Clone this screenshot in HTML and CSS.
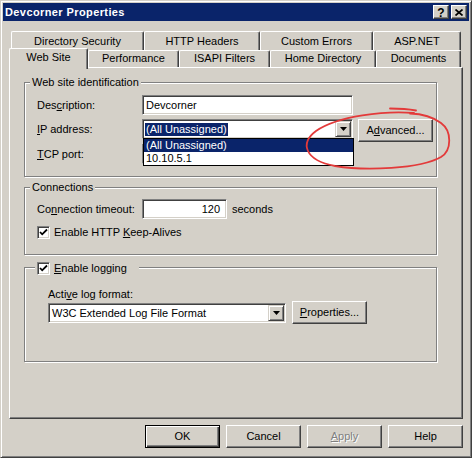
FILE: index.html
```html
<!DOCTYPE html>
<html>
<head>
<meta charset="utf-8">
<link rel="stylesheet" href="styles.css">
</head>
<body>
<div class="window">
  <div class="titlebar">
    <span class="title">Devcorner Properties</span>
    <div class="caption-btns">
      <span class="cap-btn cap-help">?</span>
      <span class="cap-btn cap-close"><svg width="8" height="7" viewBox="0 0 8 7"><path d="M0.5 0.5 L7.5 6.5 M7.5 0.5 L0.5 6.5" stroke="#000" stroke-width="1.7" fill="none"/></svg></span>
    </div>
  </div>

  <div class="tabstrip">
    <div class="tab-row tab-row-back">
      <div class="tab t-dirsec">Directory Security</div>
      <div class="tab t-http">HTTP Headers</div>
      <div class="tab t-custom">Custom Errors</div>
      <div class="tab t-asp">ASP.NET</div>
    </div>
    <div class="tab-row tab-row-front">
      <div class="tab t-web active">Web Site</div>
      <div class="tab t-perf">Performance</div>
      <div class="tab t-isapi">ISAPI Filters</div>
      <div class="tab t-home">Home Directory</div>
      <div class="tab t-docs">Documents</div>
    </div>
  </div>

  <div class="panel">
    <div class="group g-ident">
      <div class="group-title">Web site identification</div>
      <div class="form-row r-desc">
        <span class="lbl">Des<u>c</u>ription:</span>
        <div class="sunken textbox tb-desc">Devcorner</div>
      </div>
      <div class="form-row r-ip">
        <span class="lbl"><u>I</u>P address:</span>
        <div class="sunken combo cb-ip">
          <span class="combo-text"><span class="sel">(All Unassigned)</span></span>
          <span class="combo-arrow"><svg width="7" height="4" viewBox="0 0 7 4"><path d="M0 0 H7 L3.5 4 Z" fill="#000"/></svg></span>
          <ul class="droplist">
            <li class="hl">(All Unassigned)</li>
            <li>10.10.5.1</li>
          </ul>
        </div>
        <button class="btn btn-adv">A<u>d</u>vanced...</button>
      </div>
      <div class="form-row r-tcp">
        <span class="lbl"><u>T</u>CP port:</span>
        <div class="sunken textbox tb-port"></div>
      </div>
    </div>

    <div class="group g-conn">
      <div class="group-title">Connections</div>
      <div class="form-row r-timeout">
        <span class="lbl">Co<u>n</u>nection timeout:</span>
        <div class="sunken textbox tb-timeout">120</div>
        <span class="unit">seconds</span>
      </div>
      <div class="check-row r-keep">
        <span class="sunken checkbox"><svg width="9" height="9" viewBox="0 0 9 9"><path d="M1 4 L3.2 6.3 L8 1.5" stroke="#000" stroke-width="1.8" fill="none"/></svg></span>
        <span class="check-lbl">Enable HTTP <u>K</u>eep-Alives</span>
      </div>
    </div>

    <div class="group g-log">
      <div class="group-title check-title">
        <span class="sunken checkbox"><svg width="9" height="9" viewBox="0 0 9 9"><path d="M1 4 L3.2 6.3 L8 1.5" stroke="#000" stroke-width="1.8" fill="none"/></svg></span>
        <span class="check-lbl"><u>E</u>nable logging</span>
      </div>
      <div class="log-lbl">Acti<u>v</u>e log format:</div>
      <div class="log-row">
        <div class="sunken combo cb-log">
          <span class="combo-text"><span class="plain">W3C Extended Log File Format</span></span>
          <span class="combo-arrow"><svg width="7" height="4" viewBox="0 0 7 4"><path d="M0 0 H7 L3.5 4 Z" fill="#000"/></svg></span>
        </div>
        <button class="btn btn-props"><u>P</u>roperties...</button>
      </div>
    </div>
  </div>

  <div class="dialog-buttons">
    <button class="btn btn-default">OK</button>
    <button class="btn">Cancel</button>
    <button class="btn btn-disabled"><u>A</u>pply</button>
    <button class="btn">Help</button>
  </div>

  <svg class="annotation" width="472" height="458" viewBox="0 0 472 458">
    <path d="M390 108.5 C398 108.5 408 109 416 110.5" stroke="#e33a3a" stroke-width="1.8" fill="none" stroke-linecap="round"/>
    <path d="M414 113 C385 110.5 338 116 316 131 C300 143 304 160 335 166 C365 171 420 169 441 157 C452 150 452 131 441 123 C433 117 424 114 410 113.5" stroke="#e33a3a" stroke-width="1.8" fill="none" stroke-linecap="round"/>
  </svg>
</div>
</body>
</html>
```

FILE: styles.css
```css
* { box-sizing: border-box; }
html, body { margin: 0; padding: 0; overflow: hidden; }
body {
  font: 11px/13px "Liberation Sans", Arial, sans-serif;
  color: #000;
  background: #d4d0c8;
}

.window {
  position: relative;
  width: 472px;
  height: 458px;
  padding: 2px;
  border: 1px solid;
  border-color: #d4d0c8 #404040 #404040 #d4d0c8;
  box-shadow: inset 1px 1px #fff, inset -1px -1px #808080;
  background: #d4d0c8;
}

/* title bar */
.titlebar {
  height: 18px;
  background: #0a246a;
  display: flex;
  align-items: center;
  padding-left: 2px;
}
.title {
  color: #fff;
  font-weight: bold;
  letter-spacing: 0.4px;
}
.caption-btns {
  margin-left: auto;
  display: flex;
  gap: 2px;
  padding-right: 2px;
}
.cap-btn {
  width: 16px;
  height: 14px;
  display: flex;
  align-items: center;
  justify-content: center;
  background: #d4d0c8;
  border: 1px solid;
  border-color: #fff #404040 #404040 #fff;
  box-shadow: inset -1px -1px #808080;
}
.cap-help {
  font-weight: bold;
  font-size: 12px;
  line-height: 12px;
  padding-top: 1px;
}

/* tabs */
.tabstrip {
  margin: 10px 0 0 6px;
}
.tab-row {
  display: flex;
  align-items: flex-start;
}
.tab-row-back {
  margin-left: 2px;
  height: 19px;
}
.tab-row-front {
  height: 17px;
}
.tab {
  flex: none;
  text-align: center;
  background: #d4d0c8;
  border-left: 1px solid #fff;
  border-top: 1px solid #fff;
  border-right: 1px solid #404040;
  border-radius: 2px 2px 0 0;
  box-shadow: inset -1px 0 #808080;
  white-space: nowrap;
}
.tab-row-back .tab { height: 19px; padding-top: 3px; }
.tab-row-front .tab { height: 17px; padding-top: 1px; }
.tab-row-front .tab.active {
  position: relative;
  z-index: 1;
  height: 21px;
  margin-top: -2px;
  padding-top: 2px;
}
.t-dirsec { width: 133px; }
.t-http { width: 116px; }
.t-custom { width: 113px; }
.t-asp { width: 88px; }
.t-web { width: 79px; }
.t-perf { width: 91px; }
.t-isapi { width: 91px; }
.t-home { width: 106px; }
.t-docs { width: 85px; }

/* panel */
.panel {
  margin-left: 6px;
  width: 454px;
  height: 352px;
  border-left: 1px solid #fff;
  border-top: 1px solid #fff;
  border-right: 1px solid #404040;
  border-bottom: 1px solid #404040;
  box-shadow: inset -1px -1px #808080;
}

/* group boxes */
.group {
  margin-left: 14px;
  width: 413px;
  border: 1px solid #808080;
  box-shadow: inset 1px 1px #fff, 1px 1px #fff;
  padding-left: 12px;
}
.g-ident { margin-top: 14px; height: 95px; }
.g-conn { margin-top: 10px; height: 68px; }
.g-log { margin-top: 12px; height: 95px; padding-left: 0; }

.group-title {
  width: fit-content;
  margin: -7px 0 0 -7px;
  padding: 0 2px;
  background: #d4d0c8;
  line-height: 13px;
  white-space: nowrap;
}
.check-title {
  display: flex;
  align-items: center;
  margin: -6px 0 0 10px;
  padding: 0 12px 0 2px;
}

.form-row {
  display: flex;
  align-items: flex-start;
}
.lbl {
  width: 105px;
  flex: none;
  line-height: 20px;
  white-space: nowrap;
}
.r-desc { margin-top: 6px; }
.r-ip { margin-top: 4px; }
.r-tcp { margin-top: 2px; }
.r-timeout { margin-top: 5px; }

.sunken {
  background: #fff;
  border: 1px solid;
  border-color: #808080 #fff #fff #808080;
  box-shadow: inset 1px 1px #404040, inset -1px -1px #d4d0c8;
}
.textbox {
  height: 20px;
  line-height: 18px;
  padding: 0 3px;
  white-space: nowrap;
}
.tb-desc { width: 211px; }
.tb-port { width: 80px; }
.tb-timeout { width: 85px; text-align: right; padding-right: 6px; }
.unit { margin-left: 5px; line-height: 20px; }

.combo {
  position: relative;
  height: 20px;
  padding: 1px;
  display: flex;
}
.cb-ip { width: 211px; }
.cb-log { width: 238px; margin-top: 2px; }
.combo-text {
  flex: 1;
  display: flex;
  align-items: center;
  padding-left: 1px;
  white-space: nowrap;
  overflow: hidden;
}
.combo-text .sel {
  background: #0a246a;
  color: #fff;
  padding: 0 1px;
  line-height: 13px;
}
.combo-text .plain { padding-left: 1px; }
.combo-arrow {
  width: 16px;
  height: 16px;
  flex: none;
  display: flex;
  align-items: center;
  justify-content: center;
  background: #d4d0c8;
  border: 1px solid;
  border-color: #d4d0c8 #404040 #404040 #d4d0c8;
  box-shadow: inset 1px 1px #fff, inset -1px -1px #808080;
}

.droplist {
  position: absolute;
  left: 0;
  top: 100%;
  z-index: 2;
  width: 211px;
  margin: 0;
  padding: 0;
  list-style: none;
  background: #fff;
  border: 1px solid #000;
}
.droplist li {
  line-height: 13px;
  height: 13px;
  padding-left: 2px;
}
.droplist li.hl { background: #0a246a; color: #fff; }

.check-row {
  display: flex;
  align-items: center;
  margin-top: 7px;
}
.checkbox {
  width: 13px;
  height: 13px;
  flex: none;
  display: flex;
  align-items: center;
  justify-content: center;
}
.check-lbl { margin-left: 4px; white-space: nowrap; }

.log-lbl {
  margin: 13px 0 0 23px;
  line-height: 13px;
}
.log-row {
  display: flex;
  align-items: flex-start;
  margin-left: 23px;
}

/* buttons */
.btn {
  width: 75px;
  height: 23px;
  padding: 0;
  font: inherit;
  color: #000;
  background: #d4d0c8;
  border: 1px solid;
  border-color: #fff #404040 #404040 #fff;
  box-shadow: inset -1px -1px #808080;
  white-space: nowrap;
}
.btn-adv { margin-left: 5px; }
.btn-props { margin-left: 6px; }
.btn-default {
  border-color: #000;
  box-shadow: inset 1px 1px #fff, inset -1px -1px #404040, inset -2px -2px #808080;
}
.btn-disabled {
  color: #808080;
  text-shadow: 1px 1px 0 #fff;
}

.dialog-buttons {
  display: flex;
  justify-content: flex-end;
  gap: 6px;
  margin: 6px 6px 0 0;
}

.annotation {
  position: absolute;
  left: -1px;
  top: -1px;
  pointer-events: none;
  z-index: 5;
}
```
